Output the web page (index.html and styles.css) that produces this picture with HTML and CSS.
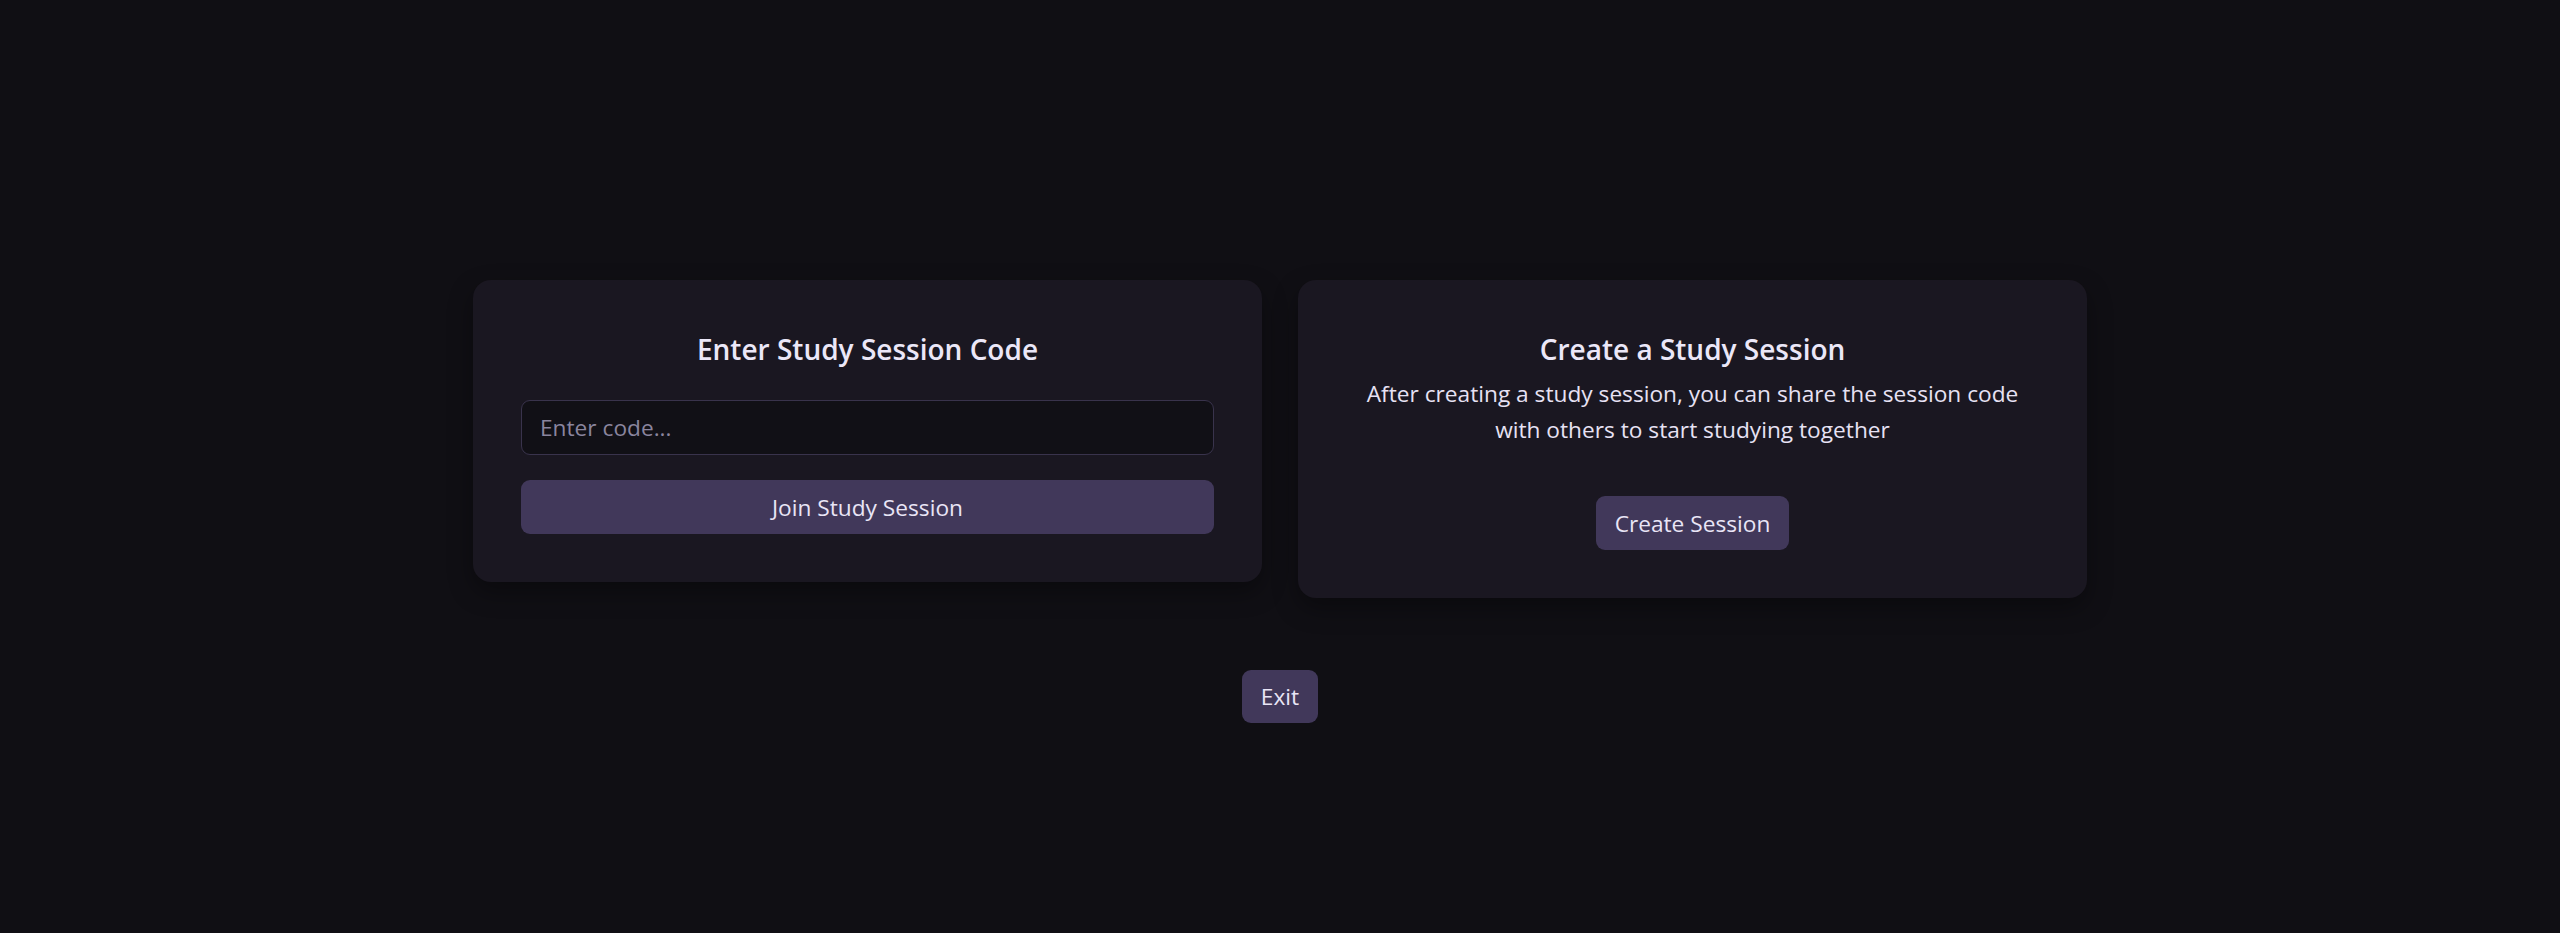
FILE: index.html
```html
<!DOCTYPE html>
<html lang="en">
<head>
<meta charset="utf-8">
<title>Study Session</title>
<link rel="stylesheet" href="styles.css">
</head>
<body>
<main class="page">
  <div class="cards">
    <section class="card">
      <h2 class="card-title card-title-spaced">Enter Study Session Code</h2>
      <input class="code-input" type="text" placeholder="Enter code...">
      <button class="btn btn-full">Join Study Session</button>
    </section>
    <section class="card">
      <h2 class="card-title">Create a Study Session</h2>
      <p class="desc">After creating a study session, you can share the session code with others to start studying together</p>
      <button class="btn btn-create">Create Session</button>
    </section>
  </div>
  <button class="btn btn-exit">Exit</button>
</main>
</body>
</html>
```

FILE: styles.css
```css
* { box-sizing: border-box; }
html, body { margin: 0; padding: 0; }
body {
  background: #100f14;
  color: #e7e2f4;
  font-family: "Open Sans", "Noto Sans", sans-serif;
  height: 933px;
}
.page {
  display: flex;
  flex-direction: column;
  align-items: center;
  padding-top: 280px;
}
.cards {
  display: grid;
  grid-template-columns: 789px 789px;
  gap: 36px;
  align-items: start;
}
.card {
  background: #1a1721;
  border-radius: 18px;
  padding: 48px;
  text-align: center;
  box-shadow: 0 10px 24px rgba(0, 0, 0, 0.35);
}
.card-title {
  margin: 0;
  font-size: 28px;
  line-height: 42px;
  font-weight: 600;
  color: #ebe7f8;
}
.card-title-spaced { margin-bottom: 30px; }
.code-input {
  display: block;
  width: 100%;
  height: 55px;
  padding: 0 18px;
  background: #111016;
  border: 1px solid #39334c;
  border-radius: 9px;
  color: #e7e2f4;
  font-family: inherit;
  font-size: 22.7px;
  outline: none;
}
.code-input::placeholder { color: #8a859e; }
.btn {
  border: none;
  background: #41385a;
  color: #e9e5f6;
  font-family: inherit;
  font-size: 22.7px;
  border-radius: 9px;
  height: 54px;
  padding: 0 19px;
  cursor: pointer;
}
.btn-full {
  display: block;
  width: 100%;
  margin-top: 25px;
}
.desc {
  margin: 6px 0 0;
  font-size: 22.7px;
  line-height: 36px;
}
.btn-create { margin-top: 48px; }
.btn-exit {
  margin-top: 72px;
  height: 53px;
}
```
